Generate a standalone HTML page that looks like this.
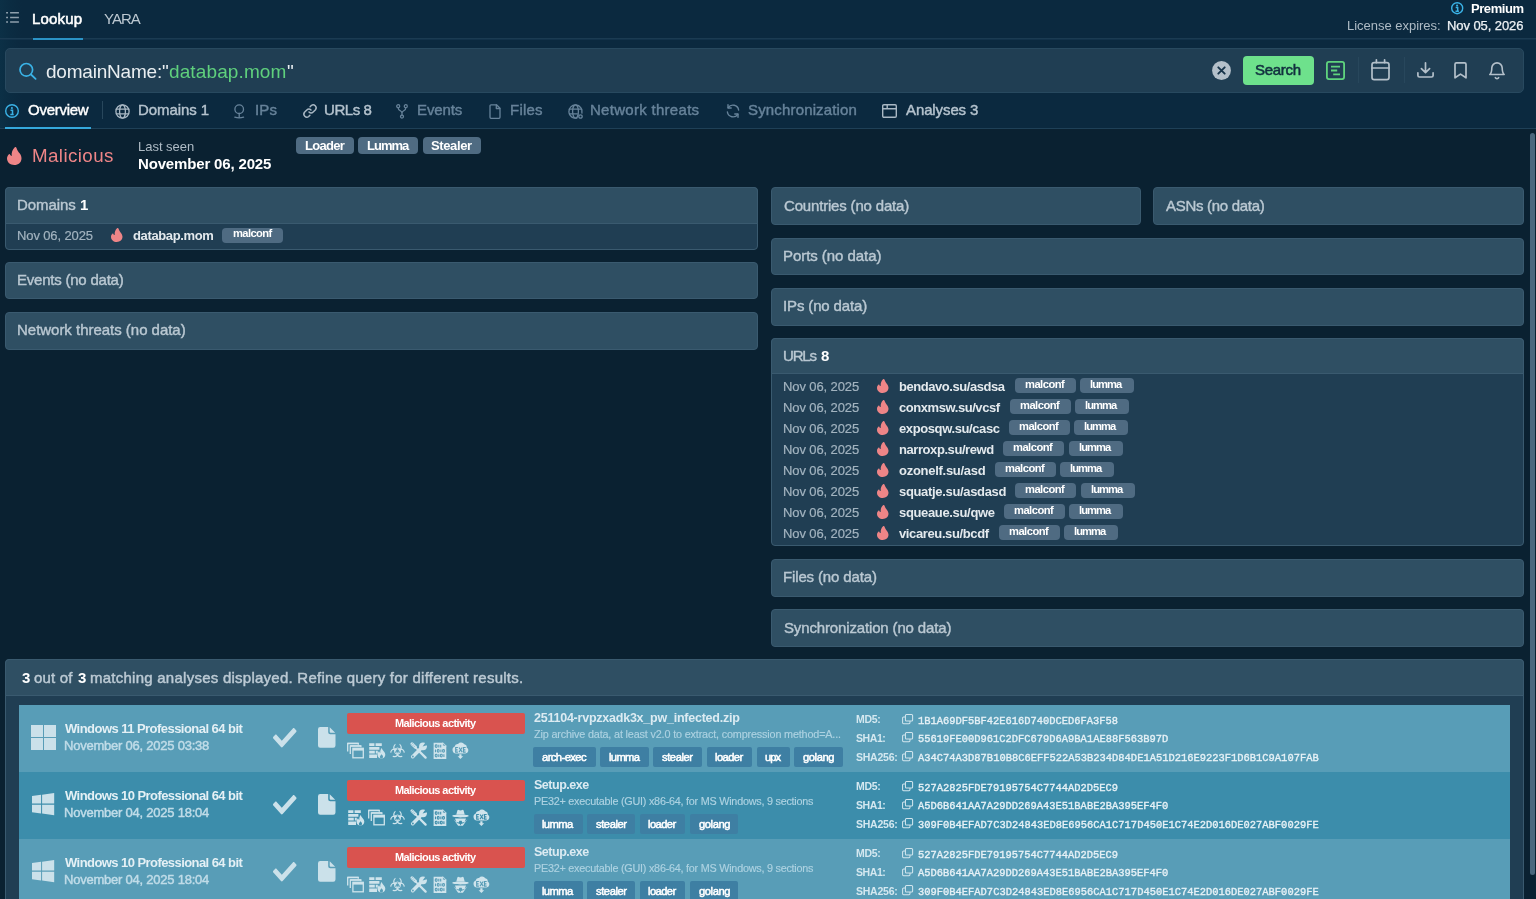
<!DOCTYPE html>
<html>
<head>
<meta charset="utf-8">
<title>Lookup</title>
<style>
*{box-sizing:border-box;margin:0;padding:0}
html,body{width:1536px;height:899px;overflow:hidden;background:#0a2131}
body{font-family:"Liberation Sans",sans-serif;color:#fff;position:relative}
.a{position:absolute}
.t{position:absolute;white-space:pre;line-height:1;will-change:transform}
svg{position:absolute;overflow:visible}
</style>
</head>
<body>
<div class="a" style="left:0px;top:0px;width:1536px;height:129px;background:#0b293f;"></div>
<div class="a" style="left:0px;top:0px;width:22px;height:129px;background:linear-gradient(90deg,#0c3046 0,#0b2c42 45%,#0b293f 100%);"></div>
<div class="a" style="left:0px;top:38px;width:1536px;height:1px;background:#1b3b52;"></div>
<div class="a" style="left:0px;top:39px;width:1536px;height:1px;background:#12324a;"></div>
<div class="a" style="left:33px;top:38px;width:50px;height:2px;background:#2b93c6;"></div>
<div class="a" style="left:5px;top:48px;width:1519px;height:45px;background:#203e53;border:1px solid #28495f;border-radius:5px"></div>
<div class="a" style="left:1243px;top:56px;width:70.5px;height:28.5px;background:#6ee18c;border-radius:4px"></div>
<div class="a" style="left:1358px;top:57px;width:1px;height:26px;background:#28475c;"></div>
<div class="a" style="left:1404px;top:57px;width:1px;height:26px;background:#28475c;"></div>
<div class="a" style="left:0px;top:128px;width:1536px;height:1px;background:#1f4057;"></div>
<div class="a" style="left:5px;top:127px;width:86px;height:2px;background:#35a8dc;"></div>
<div class="a" style="left:102px;top:101px;width:1px;height:18px;background:#28475c;"></div>
<div class="a" style="left:0px;top:129px;width:1536px;height:770px;background:#0a2131;"></div>
<div class="a" style="left:1530px;top:133px;width:4.6px;height:741.5px;background:#4b677d;border-radius:2.500px"></div>
<div class="a" style="left:296.2px;top:137px;width:57.8px;height:17px;background:#4f6b82;border-radius:4px"></div>
<div class="a" style="left:358.2px;top:137px;width:60.2px;height:17px;background:#4f6b82;border-radius:4px"></div>
<div class="a" style="left:422.8px;top:137px;width:57.8px;height:17px;background:#4f6b82;border-radius:4px"></div>
<div class="a" style="left:5px;top:187.4px;width:753.3px;height:62.19999999999999px;background:#203e53;border:1px solid #3a5a6f;border-radius:4px"></div>
<div class="a" style="left:5px;top:187.4px;width:753.3px;height:36.19999999999999px;background:#2f4f63;border:1px solid #3a5a6f;border-radius:4px 4px 0 0"></div>
<div class="a" style="left:5px;top:261.8px;width:753.3px;height:37.69999999999999px;background:#2f4f63;border:1px solid #3a5a6f;border-radius:4px"></div>
<div class="a" style="left:5px;top:312px;width:753.3px;height:37.60000000000002px;background:#2f4f63;border:1px solid #3a5a6f;border-radius:4px"></div>
<div class="a" style="left:771px;top:187.4px;width:370.20000000000005px;height:37.599999999999994px;background:#2f4f63;border:1px solid #3a5a6f;border-radius:4px"></div>
<div class="a" style="left:1153px;top:187.4px;width:370.79999999999995px;height:37.599999999999994px;background:#2f4f63;border:1px solid #3a5a6f;border-radius:4px"></div>
<div class="a" style="left:771px;top:237.8px;width:752.8px;height:37.39999999999998px;background:#2f4f63;border:1px solid #3a5a6f;border-radius:4px"></div>
<div class="a" style="left:771px;top:288px;width:752.8px;height:37.69999999999999px;background:#2f4f63;border:1px solid #3a5a6f;border-radius:4px"></div>
<div class="a" style="left:771px;top:338.2px;width:752.8px;height:208.3px;background:#203e53;border:1px solid #3a5a6f;border-radius:4px"></div>
<div class="a" style="left:771px;top:338.2px;width:752.8px;height:35.5px;background:#2f4f63;border:1px solid #3a5a6f;border-radius:4px 4px 0 0"></div>
<div class="a" style="left:771px;top:559px;width:752.8px;height:37.700000000000045px;background:#2f4f63;border:1px solid #3a5a6f;border-radius:4px"></div>
<div class="a" style="left:771px;top:609.2px;width:752.8px;height:37.5px;background:#2f4f63;border:1px solid #3a5a6f;border-radius:4px"></div>
<div class="a" style="left:222px;top:227.7px;width:60.75px;height:15.0px;background:#4f6b82;border-radius:4px"></div>
<div class="a" style="left:1014.7px;top:378.0px;width:61.0px;height:15.4px;background:#4f6b82;border-radius:4px"></div>
<div class="a" style="left:1080.2px;top:378.0px;width:54.2px;height:15.4px;background:#4f6b82;border-radius:4px"></div>
<div class="a" style="left:1009.7px;top:399.0px;width:61.0px;height:15.4px;background:#4f6b82;border-radius:4px"></div>
<div class="a" style="left:1075.2px;top:399.0px;width:54.2px;height:15.4px;background:#4f6b82;border-radius:4px"></div>
<div class="a" style="left:1008.7px;top:420.0px;width:61.0px;height:15.4px;background:#4f6b82;border-radius:4px"></div>
<div class="a" style="left:1074.2px;top:420.0px;width:54.2px;height:15.4px;background:#4f6b82;border-radius:4px"></div>
<div class="a" style="left:1003.2px;top:441.0px;width:61.0px;height:15.4px;background:#4f6b82;border-radius:4px"></div>
<div class="a" style="left:1068.7px;top:441.0px;width:54.2px;height:15.4px;background:#4f6b82;border-radius:4px"></div>
<div class="a" style="left:994.7px;top:462.0px;width:61.0px;height:15.4px;background:#4f6b82;border-radius:4px"></div>
<div class="a" style="left:1060.2px;top:462.0px;width:54.2px;height:15.4px;background:#4f6b82;border-radius:4px"></div>
<div class="a" style="left:1015.45px;top:483.0px;width:61.0px;height:15.4px;background:#4f6b82;border-radius:4px"></div>
<div class="a" style="left:1080.95px;top:483.0px;width:54.2px;height:15.4px;background:#4f6b82;border-radius:4px"></div>
<div class="a" style="left:1003.7px;top:503.99999999999994px;width:61.0px;height:15.4px;background:#4f6b82;border-radius:4px"></div>
<div class="a" style="left:1069.2px;top:503.99999999999994px;width:54.2px;height:15.4px;background:#4f6b82;border-radius:4px"></div>
<div class="a" style="left:998.7px;top:525.0px;width:61.0px;height:15.4px;background:#4f6b82;border-radius:4px"></div>
<div class="a" style="left:1064.2px;top:525.0px;width:54.2px;height:15.4px;background:#4f6b82;border-radius:4px"></div>
<div class="a" style="left:5px;top:659.2px;width:1518.8px;height:245px;background:#203e53;border:1px solid #3a5a6f;border-radius:4px 4px 0 0"></div>
<div class="a" style="left:5px;top:659.2px;width:1518.8px;height:36.8px;background:#2f4f63;border:1px solid #3a5a6f;border-radius:4px 4px 0 0"></div>
<div class="a" style="left:18.6px;top:705px;width:1491.8px;height:67px;background:#589db7;"></div>
<div class="a" style="left:30.8px;top:724.9px;width:12px;height:12px;background:#cbe1ea;"></div>
<div class="a" style="left:44.0px;top:724.9px;width:12px;height:12px;background:#cbe1ea;"></div>
<div class="a" style="left:30.8px;top:738.1px;width:12px;height:12px;background:#cbe1ea;"></div>
<div class="a" style="left:44.0px;top:738.1px;width:12px;height:12px;background:#cbe1ea;"></div>
<div class="a" style="left:347.4px;top:713.2px;width:177.4px;height:20.6px;background:#d9534f;border-radius:2px"></div>
<div class="a" style="left:533.2px;top:746.9px;width:62.7px;height:20.4px;background:#3e7fa3;border-radius:2px"></div>
<div class="a" style="left:600.2px;top:746.9px;width:48.55px;height:20.4px;background:#3e7fa3;border-radius:2px"></div>
<div class="a" style="left:653px;top:746.9px;width:49px;height:20.4px;background:#3e7fa3;border-radius:2px"></div>
<div class="a" style="left:706.5px;top:746.9px;width:45.8px;height:20.4px;background:#3e7fa3;border-radius:2px"></div>
<div class="a" style="left:756.8px;top:746.9px;width:33.3px;height:20.4px;background:#3e7fa3;border-radius:2px"></div>
<div class="a" style="left:794.4px;top:746.9px;width:48.6px;height:20.4px;background:#3e7fa3;border-radius:2px"></div>
<div class="a" style="left:18.6px;top:772px;width:1491.8px;height:67px;background:#3c8dab;"></div>
<div class="a" style="left:347.4px;top:780.2px;width:177.4px;height:20.6px;background:#d9534f;border-radius:2px"></div>
<div class="a" style="left:533.6px;top:813.9px;width:49.0px;height:20.4px;background:#3e7fa3;border-radius:2px"></div>
<div class="a" style="left:587px;top:813.9px;width:48.4px;height:20.4px;background:#3e7fa3;border-radius:2px"></div>
<div class="a" style="left:639.6px;top:813.9px;width:45.8px;height:20.4px;background:#3e7fa3;border-radius:2px"></div>
<div class="a" style="left:689.9px;top:813.9px;width:48.0px;height:20.4px;background:#3e7fa3;border-radius:2px"></div>
<div class="a" style="left:18.6px;top:839px;width:1491.8px;height:67px;background:#589db7;"></div>
<div class="a" style="left:347.4px;top:847.2px;width:177.4px;height:20.6px;background:#d9534f;border-radius:2px"></div>
<div class="a" style="left:533.6px;top:880.9px;width:49.0px;height:20.4px;background:#3e7fa3;border-radius:2px"></div>
<div class="a" style="left:587px;top:880.9px;width:48.4px;height:20.4px;background:#3e7fa3;border-radius:2px"></div>
<div class="a" style="left:639.6px;top:880.9px;width:45.8px;height:20.4px;background:#3e7fa3;border-radius:2px"></div>
<div class="a" style="left:689.9px;top:880.9px;width:48.0px;height:20.4px;background:#3e7fa3;border-radius:2px"></div>
<svg style="left:5.8px;top:12px" width="13" height="12" viewBox="0 0 13 12" ><path d="M0.100 0.700h1.900M4.100 0.700H12.900M0.100 5.500h1.900M4.100 5.500H12.900M0.100 10h1.900M4.100 10H12.900" fill="none" stroke="#8e9fac" stroke-width="1.400"/></svg>
<svg style="left:1450.3999999999999px;top:0.7999999999999998px" width="14.4" height="14.4" viewBox="-7.2 -7.2 14.4 14.4" ><circle r="5.5" fill="none" stroke="#3ab2e6" stroke-width="1.4"/><circle cx="-0.100" cy="-2.60" r="1.050" fill="#3ab2e6"/><path d="M-1.500 -0.62h2v3.60M-1.700 3.10h3.400" fill="none" stroke="#3ab2e6" stroke-width="1.500"/></svg>
<svg style="left:19px;top:61.5px" width="19" height="19" viewBox="0 0 19 19" ><circle cx="7.300" cy="7.800" r="6.300" fill="none" stroke="#3ab2e6" stroke-width="1.700"/><path d="M12 12.500l4.600 4.400" stroke="#3ab2e6" stroke-width="1.800" stroke-linecap="round"/></svg>
<svg style="left:1212px;top:61px" width="19" height="19" viewBox="-9.5 -9.5 19 19" ><circle r="9.4" fill="#b4c0ca"/><path d="M-3.2 -3.2L3.2 3.2M3.2 -3.2L-3.2 3.2" stroke="#17344a" stroke-width="1.9" stroke-linecap="round"/></svg>
<svg style="left:1326px;top:61px" width="19" height="19" viewBox="0 0 19 19" ><rect x="0.9" y="0.9" width="17.2" height="17.2" rx="2" fill="none" stroke="#5fd47e" stroke-width="1.8"/><path d="M5 5.6h9M5 9.5h6.2M7.2 13.4h6.8" stroke="#5fd47e" stroke-width="1.8"/></svg>
<svg style="left:1371px;top:59px" width="19" height="22" viewBox="0 0 19 22" ><rect x="1" y="3.6" width="17" height="17" rx="2.2" fill="none" stroke="#b4c0ca" stroke-width="1.7"/><path d="M1 9h17M5.4 0.8v2.8M13.6 0.8v2.8" stroke="#b4c0ca" stroke-width="1.7" fill="none" stroke-linecap="round"/></svg>
<svg style="left:1417px;top:62px" width="17" height="16" viewBox="0 0 17 16" ><path d="M8.5 0.8v9.6M4.4 6.6l4.1 4 4.1-4M0.9 10.8v2.6a1.6 1.6 0 0 0 1.6 1.6h12a1.6 1.6 0 0 0 1.6-1.6v-2.6" fill="none" stroke="#b4c0ca" stroke-width="1.7" stroke-linecap="round" stroke-linejoin="round"/></svg>
<svg style="left:1454px;top:62px" width="13" height="17" viewBox="0 0 13 17" ><path d="M1 2.2a1.4 1.4 0 0 1 1.4-1.4h8.2a1.4 1.4 0 0 1 1.4 1.4v13.6l-5.500-3.700-5.500 3.700z" fill="none" stroke="#b4c0ca" stroke-width="1.7" stroke-linejoin="round"/></svg>
<svg style="left:1489px;top:62px" width="16" height="18" viewBox="0 0 16 18" ><path d="M8 0.9a5.2 5.2 0 0 0-5.200 5.200c0 4.800-2 6.400-2 6.400h14.400s-2-1.600-2-6.400a5.200 5.200 0 0 0-5.200-5.200zM6.300 15.600a1.900 1.900 0 0 0 3.400 0" fill="none" stroke="#b4c0ca" stroke-width="1.6" stroke-linecap="round" stroke-linejoin="round"/></svg>
<svg style="left:4.1px;top:103.1px" width="16" height="16" viewBox="-8 -8 16 16" ><circle r="6.3" fill="none" stroke="#3ab2e6" stroke-width="1.4"/><circle cx="-0.100" cy="-2.94" r="1.050" fill="#3ab2e6"/><path d="M-1.500 -0.70h2v4.06M-1.700 3.50h3.400" fill="none" stroke="#3ab2e6" stroke-width="1.500"/></svg>
<svg style="left:115px;top:104px" width="15" height="15" viewBox="-7.5 -7.5 15 15" ><g fill="none" stroke="#a9b8c4" stroke-width="1.3" stroke-linecap="round" stroke-linejoin="round"><circle r="6.600"/><ellipse rx="2.900" ry="6.600"/><path d="M-6.200 -2.300h12.400M-6.200 2.300h12.400"/></g></svg>
<svg style="left:233px;top:104px" width="12" height="15" viewBox="0 0 12 15" ><g fill="none" stroke="#67839a" stroke-width="1.3" stroke-linecap="round" stroke-linejoin="round"><circle cx="6.200" cy="5.200" r="4.300"/><path d="M6.200 9.500v3.200M1.800 13.200q4.400 1.500 8.800 0"/></g></svg>
<svg style="left:303px;top:104px" width="14" height="14" viewBox="0 0 14 14" ><g fill="none" stroke="#a9b8c4" stroke-width="1.5" stroke-linecap="round" stroke-linejoin="round"><path d="M6 8a3 3 0 0 0 4.200 0l2.300-2.300a3 3 0 0 0-4.200-4.200l-1.200 1.200"/><path d="M8 6a3 3 0 0 0-4.200 0l-2.300 2.300a3 3 0 0 0 4.200 4.200l1.200-1.200"/></g></svg>
<svg style="left:396px;top:104px" width="12" height="15" viewBox="0 0 12 15" ><g fill="none" stroke="#67839a" stroke-width="1.3" stroke-linecap="round" stroke-linejoin="round"><circle cx="2.200" cy="2.200" r="1.500"/><circle cx="9.800" cy="2.200" r="1.500"/><circle cx="6" cy="12.600" r="1.500"/><path d="M2.200 3.700c0 3.600 3.800 2.600 3.800 5.400v2M9.800 3.700c0 3.600-3.800 2.600-3.800 5.400"/></g></svg>
<svg style="left:489px;top:104px" width="12" height="15" viewBox="0 0 12 15" ><g fill="none" stroke="#67839a" stroke-width="1.3" stroke-linecap="round" stroke-linejoin="round"><path d="M1 1.800a1 1 0 0 1 1-1h5.500l3.500 3.500v9a1 1 0 0 1-1 1h-8a1 1 0 0 1-1-1z"/><path d="M7.300 1v3.500h3.500"/></g></svg>
<svg style="left:568px;top:104px" width="15" height="15" viewBox="-7.500 -7.500 15 15" ><g fill="none" stroke="#67839a" stroke-width="1.3" stroke-linecap="round" stroke-linejoin="round"><path d="M6.400 1.500a6.600 6.600 0 1 0-5 5"/><ellipse rx="2.900" ry="6.600" /><path d="M-6.200 -2.300h12.400M-6.200 2.300h8"/><circle cx="5" cy="5" r="1.700"/></g></svg>
<svg style="left:726px;top:104px" width="14" height="14" viewBox="0 0 14 14" ><g fill="none" stroke="#67839a" stroke-width="1.4" stroke-linecap="round" stroke-linejoin="round"><path d="M12.600 6a5.700 5.700 0 0 0-10.400-2.300M1.400 8a5.700 5.700 0 0 0 10.400 2.300"/><path d="M2 0.800v3.200h3.200M12 13.200v-3.200h-3.200"/></g></svg>
<svg style="left:882px;top:103.5px" width="15" height="14" viewBox="0 0 15 14" ><g fill="none" stroke="#a9b8c4" stroke-width="1.4" stroke-linecap="round" stroke-linejoin="round"><rect x="0.700" y="0.700" width="13.600" height="12.600" rx="1.200"/><path d="M0.700 4.800h13.600M5.200 0.700v4.100"/></g></svg>
<svg style="left:7px;top:146.8px" width="14.5" height="18" viewBox="0 0 14.5 18" preserveAspectRatio="none"><path fill="#ee8587" d="M8.5 0C9.4 0.2 9.6 1 9.8 1.700C10.300 3.600 11.600 5 12.800 6.600C13.800 7.900 14.500 9.600 14.500 11.400C14.500 15.200 11.400 18 7.300 18C3.200 18 0 15.200 0 11.500C0 9.800 0.800 8.200 2 7.200C2.400 6.900 2.900 7.100 3 7.600C3.200 8.200 3.700 8.700 4.400 9C4.600 9 4.700 8.900 4.700 8.700C4.300 5.500 5.500 2.400 7.600 0.400C7.900 0.100 8.200 0 8.500 0Z"/></svg>
<svg style="left:111.4px;top:227.8px" width="11.5" height="14" viewBox="0 0 14.5 18" preserveAspectRatio="none"><path fill="#ee8587" d="M8.5 0C9.4 0.2 9.6 1 9.8 1.700C10.300 3.600 11.600 5 12.800 6.600C13.800 7.900 14.500 9.600 14.500 11.400C14.500 15.200 11.400 18 7.300 18C3.200 18 0 15.200 0 11.500C0 9.800 0.800 8.200 2 7.200C2.400 6.900 2.900 7.100 3 7.600C3.200 8.200 3.700 8.700 4.400 9C4.600 9 4.700 8.900 4.700 8.700C4.300 5.500 5.500 2.400 7.600 0.400C7.900 0.100 8.200 0 8.500 0Z"/></svg>
<svg style="left:877.1px;top:378.7px" width="11.5" height="14" viewBox="0 0 14.5 18" preserveAspectRatio="none"><path fill="#ee8587" d="M8.5 0C9.4 0.2 9.6 1 9.8 1.700C10.300 3.600 11.600 5 12.800 6.600C13.800 7.900 14.500 9.600 14.500 11.400C14.500 15.200 11.400 18 7.300 18C3.200 18 0 15.200 0 11.500C0 9.800 0.800 8.200 2 7.200C2.400 6.900 2.900 7.100 3 7.600C3.200 8.200 3.700 8.700 4.400 9C4.600 9 4.700 8.900 4.700 8.700C4.300 5.500 5.500 2.400 7.600 0.400C7.900 0.100 8.200 0 8.500 0Z"/></svg>
<svg style="left:877.1px;top:399.7px" width="11.5" height="14" viewBox="0 0 14.5 18" preserveAspectRatio="none"><path fill="#ee8587" d="M8.5 0C9.4 0.2 9.6 1 9.8 1.700C10.300 3.600 11.600 5 12.800 6.600C13.800 7.900 14.500 9.600 14.500 11.400C14.500 15.200 11.400 18 7.300 18C3.200 18 0 15.200 0 11.500C0 9.800 0.800 8.200 2 7.200C2.400 6.900 2.900 7.100 3 7.600C3.200 8.200 3.700 8.700 4.400 9C4.600 9 4.700 8.900 4.700 8.700C4.300 5.500 5.500 2.400 7.600 0.400C7.900 0.100 8.200 0 8.500 0Z"/></svg>
<svg style="left:877.1px;top:420.7px" width="11.5" height="14" viewBox="0 0 14.5 18" preserveAspectRatio="none"><path fill="#ee8587" d="M8.5 0C9.4 0.2 9.6 1 9.8 1.700C10.300 3.600 11.600 5 12.800 6.600C13.800 7.900 14.500 9.600 14.500 11.400C14.500 15.200 11.400 18 7.300 18C3.200 18 0 15.200 0 11.500C0 9.800 0.800 8.200 2 7.200C2.400 6.900 2.900 7.100 3 7.600C3.200 8.200 3.700 8.700 4.400 9C4.600 9 4.700 8.900 4.700 8.700C4.300 5.500 5.500 2.400 7.600 0.400C7.900 0.100 8.200 0 8.500 0Z"/></svg>
<svg style="left:877.1px;top:441.7px" width="11.5" height="14" viewBox="0 0 14.5 18" preserveAspectRatio="none"><path fill="#ee8587" d="M8.5 0C9.4 0.2 9.6 1 9.8 1.700C10.300 3.600 11.600 5 12.800 6.600C13.800 7.900 14.500 9.600 14.500 11.400C14.500 15.200 11.400 18 7.300 18C3.200 18 0 15.200 0 11.500C0 9.800 0.800 8.200 2 7.200C2.400 6.900 2.900 7.100 3 7.600C3.200 8.200 3.700 8.700 4.400 9C4.600 9 4.700 8.900 4.700 8.700C4.300 5.500 5.500 2.400 7.600 0.400C7.900 0.100 8.200 0 8.500 0Z"/></svg>
<svg style="left:877.1px;top:462.7px" width="11.5" height="14" viewBox="0 0 14.5 18" preserveAspectRatio="none"><path fill="#ee8587" d="M8.5 0C9.4 0.2 9.6 1 9.8 1.700C10.300 3.600 11.600 5 12.800 6.600C13.800 7.900 14.500 9.600 14.500 11.400C14.500 15.200 11.400 18 7.300 18C3.200 18 0 15.200 0 11.500C0 9.800 0.800 8.200 2 7.200C2.400 6.900 2.900 7.100 3 7.600C3.200 8.200 3.700 8.700 4.400 9C4.600 9 4.700 8.900 4.700 8.700C4.300 5.500 5.500 2.400 7.600 0.400C7.900 0.100 8.200 0 8.500 0Z"/></svg>
<svg style="left:877.1px;top:483.7px" width="11.5" height="14" viewBox="0 0 14.5 18" preserveAspectRatio="none"><path fill="#ee8587" d="M8.5 0C9.4 0.2 9.6 1 9.8 1.700C10.300 3.600 11.600 5 12.800 6.600C13.800 7.900 14.500 9.600 14.500 11.400C14.500 15.200 11.400 18 7.300 18C3.200 18 0 15.200 0 11.500C0 9.800 0.800 8.200 2 7.200C2.400 6.900 2.900 7.100 3 7.600C3.200 8.200 3.700 8.700 4.400 9C4.600 9 4.700 8.900 4.700 8.700C4.300 5.500 5.500 2.400 7.600 0.400C7.900 0.100 8.200 0 8.500 0Z"/></svg>
<svg style="left:877.1px;top:504.69999999999993px" width="11.5" height="14" viewBox="0 0 14.5 18" preserveAspectRatio="none"><path fill="#ee8587" d="M8.5 0C9.4 0.2 9.6 1 9.8 1.700C10.300 3.600 11.600 5 12.800 6.600C13.800 7.900 14.500 9.600 14.500 11.400C14.500 15.200 11.400 18 7.300 18C3.200 18 0 15.200 0 11.500C0 9.800 0.800 8.200 2 7.200C2.400 6.900 2.900 7.100 3 7.600C3.200 8.200 3.700 8.700 4.400 9C4.600 9 4.700 8.900 4.700 8.700C4.300 5.500 5.500 2.400 7.600 0.400C7.900 0.100 8.200 0 8.500 0Z"/></svg>
<svg style="left:877.1px;top:525.6999999999999px" width="11.5" height="14" viewBox="0 0 14.5 18" preserveAspectRatio="none"><path fill="#ee8587" d="M8.5 0C9.4 0.2 9.6 1 9.8 1.700C10.300 3.600 11.600 5 12.800 6.600C13.800 7.900 14.500 9.600 14.500 11.400C14.500 15.200 11.400 18 7.300 18C3.200 18 0 15.200 0 11.500C0 9.800 0.800 8.200 2 7.200C2.400 6.900 2.900 7.100 3 7.600C3.200 8.200 3.700 8.700 4.400 9C4.600 9 4.700 8.900 4.700 8.700C4.300 5.500 5.500 2.400 7.600 0.400C7.900 0.100 8.200 0 8.500 0Z"/></svg>
<svg style="left:273px;top:727.7px" width="23.5" height="19.5" viewBox="0 65 512 382" preserveAspectRatio="none"><path fill="#cbe1ea" d="M173.898 439.404l-166.4-166.4c-9.997-9.997-9.997-26.206 0-36.204l36.203-36.204c9.997-9.998 26.207-9.998 36.204 0L192 312.69 432.095 72.596c9.997-9.997 26.207-9.997 36.204 0l36.203 36.204c9.997 9.997 9.997 26.206 0 36.204l-294.4 294.401c-9.998 9.997-26.207 9.997-36.204-.001z"/></svg>
<svg style="left:317.8px;top:727.1px" width="17.5" height="20.8" viewBox="0 0 17.500 20.800" ><path fill="#cbe1ea" d="M2.200 0h8v5.300a2 2 0 0 0 2 2h5.300v11.300a2.200 2.200 0 0 1-2.200 2.200H2.200A2.200 2.200 0 0 1 0 18.600V2.200A2.200 2.200 0 0 1 2.200 0zM11.700 0.300l5.500 5.500h-4.500a1 1 0 0 1-1-1z"/></svg>
<svg style="left:347px;top:742.2px" width="17" height="17" viewBox="0 0 17 17" ><g fill="none" stroke="#cfe4ec" stroke-width="1.300"><path d="M0.700 9.500V1.300h10.600v1.400M3.300 12V3.800h10.600v1.400"/><rect x="5.900" y="6.300" width="10.400" height="9.500"/></g><path d="M5.900 6.300h10.400v2.300H5.900z" fill="#cfe4ec"/><path d="M0.700 0.700h10.600v1.500H0.700zM3.300 3.200h10.600v1.500H3.300z" fill="#cfe4ec"/></svg>
<svg style="left:368.2px;top:742.2px" width="17" height="17" viewBox="0 0 17 17" ><g fill="#cfe4ec"><path d="M1.200 1.200h5.200v2.700H1.200zM7.600 1.200h6.200v2.700H7.600zM1.200 5h10.200v2.700H1.200zM1.200 8.800h5.600v2.700H1.200zM7.800 8.800h2v2.700h-2zM1.200 12.600h7.800v3.400H1.200z"/><path d="M13.700 6c0.600 2.400 3.600 3.800 3.600 6.800 0 2.200-1.700 3.800-3.900 3.800s-3.900-1.600-3.900-3.800c0-1.700 0.900-2.800 1.600-3.500 0.200 0.900 0.600 1.500 1.200 1.700-0.200-1.900 0.300-3.700 1.400-5z"/></g><path d="M13.500 12.300c0.900 0.900 1.500 1.500 1.500 2.500 0 0.900-0.700 1.600-1.600 1.600s-1.500-0.700-1.500-1.500c0-0.900 0.800-1.500 1.600-2.600z" fill="#589db7"/></svg>
<svg style="left:389px;top:742.2px" width="17" height="17" viewBox="-8.500 -8.500 17 17" ><g fill="none" stroke="#cfe4ec" stroke-width="1.250"><circle cx="0.00" cy="-2.90" r="3.700"/><circle cx="3.03" cy="2.35" r="3.700"/><circle cx="-3.03" cy="2.35" r="3.700"/></g><circle cx="0.00" cy="-7.00" r="2.300" fill="#589db7"/><circle cx="6.58" cy="4.40" r="2.300" fill="#589db7"/><circle cx="-6.58" cy="4.40" r="2.300" fill="#589db7"/><circle cx="0" cy="0.600" r="1.500" fill="#589db7"/><circle cx="0" cy="0.600" r="3.100" fill="none" stroke="#cfe4ec" stroke-width="0.950"/></svg>
<svg style="left:410px;top:742.2px" width="17" height="17" viewBox="0 0 17 17" ><g stroke="#cfe4ec" stroke-linecap="round" fill="none"><path d="M2.700 14.700L11.800 5.600" stroke-width="3.500"/><path d="M2 1.800l3.400 3.400" stroke-width="3.100"/><path d="M5.600 5.600l4.200 4.200" stroke-width="1.500"/><path d="M10.200 10.200l5.400 5.400" stroke-width="2.300"/></g><circle cx="13" cy="4.300" r="3.900" fill="#cfe4ec"/><path d="M12.600 4.600L16.200 -0.600 18.600 2.800z" fill="#589db7"/><circle cx="2.900" cy="14.500" r="0.900" fill="#589db7"/><path d="M1.300 2.700l1.500-1.500M2.500 3.900l1.500-1.500M3.700 5.100l1.500-1.500" stroke="#589db7" stroke-width="0.500"/></svg>
<svg style="left:432.6px;top:742.2px" width="14" height="17" viewBox="0 0 14 17" ><path d="M0.600 0.700h9.300l3.400 3.400v12.900H0.600z" fill="#cfe4ec"/><path d="M9.900 0.700v3.400h3.400z" fill="#589db7" stroke="#cfe4ec" stroke-width="0.800"/><g fill="none" stroke="#589db7" stroke-width="1.100"><rect x="2.300" y="2.800" width="1.800" height="2.700" rx="0.900"/><path d="M5.800 2.800v2.700M7.700 2.800v2.700"/><path d="M2.500 7.500v2.700"/><rect x="4.300" y="7.500" width="1.800" height="2.700" rx="0.900"/><path d="M7.900 7.500v2.700"/><rect x="9.600" y="7.500" width="1.800" height="2.700" rx="0.900"/><rect x="2.300" y="12.200" width="1.800" height="2.700" rx="0.900"/><path d="M5.800 12.200v2.700"/><rect x="7.400" y="12.200" width="1.800" height="2.700" rx="0.900"/><path d="M10.900 12.200v2.700"/></g></svg>
<svg style="left:451.6px;top:742.2px" width="17" height="17" viewBox="0 0 17 17" ><path d="M3.900 11.500a3.600 3.600 0 0 1-1.200-6.900 3 3 0 0 1 3.300-2.600 4 4 0 0 1 6.300 0.300 3 3 0 0 1 2.400 3.200 3.200 3.200 0 0 1-1.300 6z" fill="#cfe4ec"/><path d="M7.300 12.300h2.200v1.900h1.700l-2.800 2.900-2.800-2.900h1.700z" fill="#cfe4ec"/><path d="M5.900 5.500H3.700v4.600h2.200M3.700 7.800h1.900M7 5.500l3.200 4.600M10.200 5.500L7 10.100M13.700 5.500h-2.200v4.600h2.200M11.500 7.800h1.900" fill="none" stroke="#589db7" stroke-width="1.150"/></svg>
<svg style="left:902px;top:714.0px" width="11.4" height="10.4" viewBox="0 0 12 11" ><g fill="none" stroke="#d2e6ee" stroke-width="1.100"><rect x="3.600" y="0.550" width="7.600" height="6.800" rx="1.100"/><path d="M3.600 3.200H1.600a1 1 0 0 0-1 1v5.100a1 1 0 0 0 1 1h5.800a1 1 0 0 0 1-1V7.400"/></g></svg>
<svg style="left:902px;top:732.4000000000001px" width="11.4" height="10.4" viewBox="0 0 12 11" ><g fill="none" stroke="#d2e6ee" stroke-width="1.100"><rect x="3.600" y="0.550" width="7.600" height="6.800" rx="1.100"/><path d="M3.600 3.200H1.600a1 1 0 0 0-1 1v5.100a1 1 0 0 0 1 1h5.800a1 1 0 0 0 1-1V7.400"/></g></svg>
<svg style="left:902px;top:751.4000000000001px" width="11.4" height="10.4" viewBox="0 0 12 11" ><g fill="none" stroke="#d2e6ee" stroke-width="1.100"><rect x="3.600" y="0.550" width="7.600" height="6.800" rx="1.100"/><path d="M3.600 3.200H1.600a1 1 0 0 0-1 1v5.100a1 1 0 0 0 1 1h5.800a1 1 0 0 0 1-1V7.400"/></g></svg>
<svg style="left:32.4px;top:793.2px" width="22.2" height="22.2" viewBox="0 32 448 448" preserveAspectRatio="none"><path fill="#cbe1ea" d="M0 93.7l183.600-25.300v177.400H0V93.700zm0 324.600l183.600 25.300V268.400H0v149.900zm203.800 28L448 480V268.400H203.800v177.900zm0-380.600v180.100H448V32L203.800 65.700z"/></svg>
<svg style="left:273px;top:794.7px" width="23.5" height="19.5" viewBox="0 65 512 382" preserveAspectRatio="none"><path fill="#cbe1ea" d="M173.898 439.404l-166.4-166.4c-9.997-9.997-9.997-26.206 0-36.204l36.203-36.204c9.997-9.998 26.207-9.998 36.204 0L192 312.69 432.095 72.596c9.997-9.997 26.207-9.997 36.204 0l36.203 36.204c9.997 9.997 9.997 26.206 0 36.204l-294.4 294.401c-9.998 9.997-26.207 9.997-36.204-.001z"/></svg>
<svg style="left:317.8px;top:794.1px" width="17.5" height="20.8" viewBox="0 0 17.500 20.800" ><path fill="#cbe1ea" d="M2.200 0h8v5.300a2 2 0 0 0 2 2h5.300v11.300a2.200 2.200 0 0 1-2.200 2.200H2.200A2.200 2.200 0 0 1 0 18.600V2.200A2.200 2.200 0 0 1 2.200 0zM11.700 0.300l5.500 5.500h-4.500a1 1 0 0 1-1-1z"/></svg>
<svg style="left:347px;top:809.2px" width="17" height="17" viewBox="0 0 17 17" ><g fill="#cfe4ec"><path d="M1.200 1.200h5.200v2.700H1.200zM7.600 1.200h6.200v2.700H7.600zM1.200 5h10.200v2.700H1.200zM1.200 8.800h5.600v2.700H1.200zM7.800 8.800h2v2.700h-2zM1.200 12.600h7.800v3.400H1.200z"/><path d="M13.700 6c0.600 2.400 3.600 3.800 3.600 6.800 0 2.200-1.700 3.800-3.900 3.800s-3.900-1.600-3.900-3.800c0-1.700 0.900-2.800 1.600-3.500 0.200 0.900 0.600 1.500 1.200 1.700-0.200-1.900 0.300-3.700 1.400-5z"/></g><path d="M13.500 12.300c0.900 0.900 1.500 1.500 1.500 2.500 0 0.900-0.700 1.600-1.600 1.600s-1.500-0.700-1.500-1.500c0-0.900 0.800-1.500 1.600-2.600z" fill="#3c8dab"/></svg>
<svg style="left:368.2px;top:809.2px" width="17" height="17" viewBox="0 0 17 17" ><g fill="none" stroke="#cfe4ec" stroke-width="1.300"><path d="M0.700 9.500V1.300h10.600v1.400M3.300 12V3.800h10.600v1.400"/><rect x="5.900" y="6.300" width="10.400" height="9.500"/></g><path d="M5.900 6.300h10.400v2.300H5.900z" fill="#cfe4ec"/><path d="M0.700 0.700h10.600v1.500H0.700zM3.300 3.200h10.600v1.500H3.300z" fill="#cfe4ec"/></svg>
<svg style="left:389px;top:809.2px" width="17" height="17" viewBox="-8.500 -8.500 17 17" ><g fill="none" stroke="#cfe4ec" stroke-width="1.250"><circle cx="0.00" cy="-2.90" r="3.700"/><circle cx="3.03" cy="2.35" r="3.700"/><circle cx="-3.03" cy="2.35" r="3.700"/></g><circle cx="0.00" cy="-7.00" r="2.300" fill="#3c8dab"/><circle cx="6.58" cy="4.40" r="2.300" fill="#3c8dab"/><circle cx="-6.58" cy="4.40" r="2.300" fill="#3c8dab"/><circle cx="0" cy="0.600" r="1.500" fill="#3c8dab"/><circle cx="0" cy="0.600" r="3.100" fill="none" stroke="#cfe4ec" stroke-width="0.950"/></svg>
<svg style="left:410px;top:809.2px" width="17" height="17" viewBox="0 0 17 17" ><g stroke="#cfe4ec" stroke-linecap="round" fill="none"><path d="M2.700 14.700L11.800 5.600" stroke-width="3.500"/><path d="M2 1.800l3.400 3.400" stroke-width="3.100"/><path d="M5.600 5.600l4.200 4.200" stroke-width="1.500"/><path d="M10.200 10.200l5.400 5.400" stroke-width="2.300"/></g><circle cx="13" cy="4.300" r="3.900" fill="#cfe4ec"/><path d="M12.600 4.600L16.200 -0.600 18.600 2.800z" fill="#3c8dab"/><circle cx="2.900" cy="14.500" r="0.900" fill="#3c8dab"/><path d="M1.300 2.700l1.500-1.500M2.500 3.900l1.500-1.500M3.700 5.100l1.500-1.500" stroke="#3c8dab" stroke-width="0.500"/></svg>
<svg style="left:432.6px;top:809.2px" width="14" height="17" viewBox="0 0 14 17" ><path d="M0.600 0.700h9.300l3.400 3.400v12.900H0.600z" fill="#cfe4ec"/><path d="M9.900 0.700v3.400h3.400z" fill="#3c8dab" stroke="#cfe4ec" stroke-width="0.800"/><g fill="none" stroke="#3c8dab" stroke-width="1.100"><rect x="2.300" y="2.800" width="1.800" height="2.700" rx="0.900"/><path d="M5.800 2.800v2.700M7.700 2.800v2.700"/><path d="M2.500 7.500v2.700"/><rect x="4.300" y="7.500" width="1.800" height="2.700" rx="0.900"/><path d="M7.900 7.500v2.700"/><rect x="9.600" y="7.500" width="1.800" height="2.700" rx="0.900"/><rect x="2.300" y="12.200" width="1.800" height="2.700" rx="0.900"/><path d="M5.800 12.200v2.700"/><rect x="7.400" y="12.200" width="1.800" height="2.700" rx="0.900"/><path d="M10.900 12.200v2.700"/></g></svg>
<svg style="left:452px;top:809.2px" width="17" height="17" viewBox="0 0 17 17" ><g fill="#cfe4ec"><path d="M4.300 5.600L5.400 1.500c0.200-0.600 0.700-0.800 1.200-0.600l1.900 0.700 1.900-0.700c0.500-0.200 1 0 1.200 0.600l1.100 4.100z"/><path d="M0.300 7c0-0.800 3.700-1.400 8.200-1.400s8.200 0.600 8.200 1.400-3.700 1.400-8.200 1.400-8.200-0.600-8.200-1.400z"/><path d="M3 9.500h11l-1.300 3.400-2.400 0.500-0.700-1.700h-2.200l-0.700 1.700-2.400-0.500z"/><path d="M1.600 10.300l3.600 3.700 2.600 1 0.700 1.600 0.700-1.600 2.600-1 3.600-3.700-4.500 6.500h-4.800z"/></g></svg>
<svg style="left:473px;top:809.2px" width="17" height="17" viewBox="0 0 17 17" ><path d="M3.900 11.500a3.600 3.600 0 0 1-1.200-6.900 3 3 0 0 1 3.300-2.600 4 4 0 0 1 6.300 0.300 3 3 0 0 1 2.400 3.200 3.200 3.200 0 0 1-1.300 6z" fill="#cfe4ec"/><path d="M7.300 12.300h2.200v1.900h1.700l-2.800 2.900-2.800-2.900h1.700z" fill="#cfe4ec"/><path d="M5.900 5.500H3.700v4.600h2.200M3.700 7.800h1.900M7 5.500l3.200 4.600M10.200 5.500L7 10.100M13.700 5.500h-2.200v4.600h2.200M11.500 7.800h1.900" fill="none" stroke="#3c8dab" stroke-width="1.150"/></svg>
<svg style="left:902px;top:781.0px" width="11.4" height="10.4" viewBox="0 0 12 11" ><g fill="none" stroke="#d2e6ee" stroke-width="1.100"><rect x="3.600" y="0.550" width="7.600" height="6.800" rx="1.100"/><path d="M3.600 3.200H1.600a1 1 0 0 0-1 1v5.100a1 1 0 0 0 1 1h5.800a1 1 0 0 0 1-1V7.400"/></g></svg>
<svg style="left:902px;top:799.4000000000001px" width="11.4" height="10.4" viewBox="0 0 12 11" ><g fill="none" stroke="#d2e6ee" stroke-width="1.100"><rect x="3.600" y="0.550" width="7.600" height="6.800" rx="1.100"/><path d="M3.600 3.200H1.600a1 1 0 0 0-1 1v5.100a1 1 0 0 0 1 1h5.800a1 1 0 0 0 1-1V7.400"/></g></svg>
<svg style="left:902px;top:818.4000000000001px" width="11.4" height="10.4" viewBox="0 0 12 11" ><g fill="none" stroke="#d2e6ee" stroke-width="1.100"><rect x="3.600" y="0.550" width="7.600" height="6.800" rx="1.100"/><path d="M3.600 3.200H1.600a1 1 0 0 0-1 1v5.100a1 1 0 0 0 1 1h5.800a1 1 0 0 0 1-1V7.400"/></g></svg>
<svg style="left:32.4px;top:860.2px" width="22.2" height="22.2" viewBox="0 32 448 448" preserveAspectRatio="none"><path fill="#cbe1ea" d="M0 93.7l183.600-25.300v177.400H0V93.700zm0 324.600l183.600 25.300V268.400H0v149.900zm203.800 28L448 480V268.400H203.800v177.900zm0-380.600v180.100H448V32L203.800 65.700z"/></svg>
<svg style="left:273px;top:861.7px" width="23.5" height="19.5" viewBox="0 65 512 382" preserveAspectRatio="none"><path fill="#cbe1ea" d="M173.898 439.404l-166.4-166.4c-9.997-9.997-9.997-26.206 0-36.204l36.203-36.204c9.997-9.998 26.207-9.998 36.204 0L192 312.69 432.095 72.596c9.997-9.997 26.207-9.997 36.204 0l36.203 36.204c9.997 9.997 9.997 26.206 0 36.204l-294.4 294.401c-9.998 9.997-26.207 9.997-36.204-.001z"/></svg>
<svg style="left:317.8px;top:861.1px" width="17.5" height="20.8" viewBox="0 0 17.500 20.800" ><path fill="#cbe1ea" d="M2.200 0h8v5.300a2 2 0 0 0 2 2h5.300v11.300a2.200 2.200 0 0 1-2.200 2.200H2.200A2.200 2.200 0 0 1 0 18.600V2.200A2.200 2.200 0 0 1 2.200 0zM11.700 0.300l5.500 5.500h-4.500a1 1 0 0 1-1-1z"/></svg>
<svg style="left:347px;top:876.2px" width="17" height="17" viewBox="0 0 17 17" ><g fill="none" stroke="#cfe4ec" stroke-width="1.300"><path d="M0.700 9.500V1.300h10.600v1.400M3.300 12V3.800h10.600v1.400"/><rect x="5.900" y="6.300" width="10.400" height="9.500"/></g><path d="M5.900 6.300h10.400v2.300H5.900z" fill="#cfe4ec"/><path d="M0.700 0.700h10.600v1.500H0.700zM3.300 3.200h10.600v1.500H3.300z" fill="#cfe4ec"/></svg>
<svg style="left:368.2px;top:876.2px" width="17" height="17" viewBox="0 0 17 17" ><g fill="#cfe4ec"><path d="M1.200 1.200h5.200v2.700H1.200zM7.600 1.200h6.200v2.700H7.600zM1.200 5h10.200v2.700H1.200zM1.200 8.800h5.600v2.700H1.200zM7.800 8.800h2v2.700h-2zM1.200 12.600h7.800v3.400H1.200z"/><path d="M13.700 6c0.600 2.400 3.600 3.800 3.600 6.800 0 2.200-1.700 3.800-3.900 3.800s-3.900-1.600-3.900-3.800c0-1.700 0.900-2.800 1.600-3.500 0.200 0.900 0.600 1.500 1.200 1.700-0.200-1.900 0.300-3.700 1.400-5z"/></g><path d="M13.500 12.300c0.900 0.900 1.500 1.500 1.500 2.500 0 0.900-0.700 1.600-1.600 1.600s-1.500-0.700-1.500-1.500c0-0.900 0.800-1.500 1.600-2.600z" fill="#589db7"/></svg>
<svg style="left:389px;top:876.2px" width="17" height="17" viewBox="-8.500 -8.500 17 17" ><g fill="none" stroke="#cfe4ec" stroke-width="1.250"><circle cx="0.00" cy="-2.90" r="3.700"/><circle cx="3.03" cy="2.35" r="3.700"/><circle cx="-3.03" cy="2.35" r="3.700"/></g><circle cx="0.00" cy="-7.00" r="2.300" fill="#589db7"/><circle cx="6.58" cy="4.40" r="2.300" fill="#589db7"/><circle cx="-6.58" cy="4.40" r="2.300" fill="#589db7"/><circle cx="0" cy="0.600" r="1.500" fill="#589db7"/><circle cx="0" cy="0.600" r="3.100" fill="none" stroke="#cfe4ec" stroke-width="0.950"/></svg>
<svg style="left:410px;top:876.2px" width="17" height="17" viewBox="0 0 17 17" ><g stroke="#cfe4ec" stroke-linecap="round" fill="none"><path d="M2.700 14.700L11.800 5.600" stroke-width="3.500"/><path d="M2 1.800l3.400 3.400" stroke-width="3.100"/><path d="M5.600 5.600l4.200 4.200" stroke-width="1.500"/><path d="M10.200 10.200l5.400 5.400" stroke-width="2.300"/></g><circle cx="13" cy="4.300" r="3.900" fill="#cfe4ec"/><path d="M12.600 4.600L16.200 -0.600 18.600 2.800z" fill="#589db7"/><circle cx="2.900" cy="14.500" r="0.900" fill="#589db7"/><path d="M1.300 2.700l1.500-1.500M2.500 3.900l1.500-1.500M3.700 5.100l1.500-1.500" stroke="#589db7" stroke-width="0.500"/></svg>
<svg style="left:432.6px;top:876.2px" width="14" height="17" viewBox="0 0 14 17" ><path d="M0.600 0.700h9.300l3.400 3.400v12.900H0.600z" fill="#cfe4ec"/><path d="M9.900 0.700v3.400h3.400z" fill="#589db7" stroke="#cfe4ec" stroke-width="0.800"/><g fill="none" stroke="#589db7" stroke-width="1.100"><rect x="2.300" y="2.800" width="1.800" height="2.700" rx="0.900"/><path d="M5.800 2.800v2.700M7.700 2.800v2.700"/><path d="M2.500 7.500v2.700"/><rect x="4.300" y="7.500" width="1.800" height="2.700" rx="0.900"/><path d="M7.900 7.500v2.700"/><rect x="9.600" y="7.500" width="1.800" height="2.700" rx="0.900"/><rect x="2.300" y="12.200" width="1.800" height="2.700" rx="0.900"/><path d="M5.800 12.200v2.700"/><rect x="7.400" y="12.200" width="1.800" height="2.700" rx="0.900"/><path d="M10.900 12.200v2.700"/></g></svg>
<svg style="left:452px;top:876.2px" width="17" height="17" viewBox="0 0 17 17" ><g fill="#cfe4ec"><path d="M4.300 5.600L5.400 1.500c0.200-0.600 0.700-0.800 1.200-0.600l1.900 0.700 1.900-0.700c0.500-0.200 1 0 1.200 0.600l1.100 4.100z"/><path d="M0.300 7c0-0.800 3.700-1.400 8.200-1.400s8.200 0.600 8.200 1.400-3.700 1.400-8.200 1.400-8.200-0.600-8.200-1.400z"/><path d="M3 9.500h11l-1.300 3.400-2.400 0.500-0.700-1.700h-2.200l-0.700 1.700-2.400-0.500z"/><path d="M1.600 10.300l3.600 3.700 2.600 1 0.700 1.600 0.700-1.600 2.600-1 3.600-3.700-4.500 6.500h-4.800z"/></g></svg>
<svg style="left:473px;top:876.2px" width="17" height="17" viewBox="0 0 17 17" ><path d="M3.900 11.500a3.600 3.600 0 0 1-1.200-6.900 3 3 0 0 1 3.300-2.600 4 4 0 0 1 6.300 0.300 3 3 0 0 1 2.400 3.200 3.200 3.200 0 0 1-1.300 6z" fill="#cfe4ec"/><path d="M7.300 12.300h2.200v1.900h1.700l-2.800 2.900-2.800-2.900h1.700z" fill="#cfe4ec"/><path d="M5.900 5.500H3.700v4.600h2.200M3.700 7.800h1.900M7 5.500l3.200 4.600M10.200 5.500L7 10.100M13.700 5.500h-2.200v4.600h2.200M11.500 7.800h1.900" fill="none" stroke="#589db7" stroke-width="1.150"/></svg>
<svg style="left:902px;top:848.0px" width="11.4" height="10.4" viewBox="0 0 12 11" ><g fill="none" stroke="#d2e6ee" stroke-width="1.100"><rect x="3.600" y="0.550" width="7.600" height="6.800" rx="1.100"/><path d="M3.600 3.200H1.600a1 1 0 0 0-1 1v5.100a1 1 0 0 0 1 1h5.800a1 1 0 0 0 1-1V7.400"/></g></svg>
<svg style="left:902px;top:866.4000000000001px" width="11.4" height="10.4" viewBox="0 0 12 11" ><g fill="none" stroke="#d2e6ee" stroke-width="1.100"><rect x="3.600" y="0.550" width="7.600" height="6.800" rx="1.100"/><path d="M3.600 3.200H1.600a1 1 0 0 0-1 1v5.100a1 1 0 0 0 1 1h5.800a1 1 0 0 0 1-1V7.400"/></g></svg>
<svg style="left:902px;top:885.4000000000001px" width="11.4" height="10.4" viewBox="0 0 12 11" ><g fill="none" stroke="#d2e6ee" stroke-width="1.100"><rect x="3.600" y="0.550" width="7.600" height="6.800" rx="1.100"/><path d="M3.600 3.200H1.600a1 1 0 0 0-1 1v5.100a1 1 0 0 0 1 1h5.800a1 1 0 0 0 1-1V7.400"/></g></svg>
<div class="t" style="left:32.02px;top:11.00px;font-size:15px;color:#fff;letter-spacing:0.166px;-webkit-text-stroke:0.55px #fff">Lookup</div>
<div class="t" style="left:103.75px;top:11.00px;font-size:15px;color:#bcc8d1;letter-spacing:-0.993px">YARA</div>
<div class="t" style="left:1470.75px;top:2.00px;font-size:13px;color:#fff;letter-spacing:-0.429px;font-weight:bold">Premium</div>
<div class="t" style="left:1346.50px;top:19.00px;font-size:13px;color:#aebbc5;letter-spacing:-0.022px">License expires:</div>
<div class="t" style="left:1446.88px;top:19.00px;font-size:13px;color:#eef2f5;letter-spacing:-0.078px;-webkit-text-stroke:0.25px #eef2f5">Nov 05, 2026</div>
<div class="t" style="left:46.25px;top:62.00px;font-size:19px;color:#e9eef1;letter-spacing:-0.212px">domainName:&quot;</div>
<div class="t" style="left:169.20px;top:62.00px;font-size:19px;color:#5fd07d;letter-spacing:0.120px">databap.mom</div>
<div class="t" style="left:286.60px;top:62.00px;font-size:19px;color:#e9eef1;letter-spacing:0.000px">&quot;</div>
<div class="t" style="left:1255.28px;top:62.00px;font-size:15px;color:#12303f;letter-spacing:-0.297px;-webkit-text-stroke:0.55px #12303f">Search</div>
<div class="t" style="left:28.46px;top:102.00px;font-size:15px;color:#fff;letter-spacing:-0.264px;-webkit-text-stroke:0.42px #fff">Overview</div>
<div class="t" style="left:138.46px;top:102.00px;font-size:15px;color:#b5c3ce;letter-spacing:-0.066px;-webkit-text-stroke:0.42px #b5c3ce">Domains 1</div>
<div class="t" style="left:254.71px;top:102.00px;font-size:15px;color:#67839a;letter-spacing:0.204px;-webkit-text-stroke:0.42px #67839a">IPs</div>
<div class="t" style="left:324.21px;top:102.00px;font-size:15px;color:#b5c3ce;letter-spacing:-0.419px;-webkit-text-stroke:0.42px #b5c3ce">URLs 8</div>
<div class="t" style="left:416.71px;top:102.00px;font-size:15px;color:#67839a;letter-spacing:-0.105px;-webkit-text-stroke:0.42px #67839a">Events</div>
<div class="t" style="left:509.71px;top:102.00px;font-size:15px;color:#67839a;letter-spacing:0.228px;-webkit-text-stroke:0.42px #67839a">Files</div>
<div class="t" style="left:590.21px;top:102.00px;font-size:15px;color:#67839a;letter-spacing:0.289px;-webkit-text-stroke:0.42px #67839a">Network threats</div>
<div class="t" style="left:748.21px;top:102.00px;font-size:15px;color:#67839a;letter-spacing:0.157px;-webkit-text-stroke:0.42px #67839a">Synchronization</div>
<div class="t" style="left:906.46px;top:102.00px;font-size:15px;color:#b5c3ce;letter-spacing:-0.106px;-webkit-text-stroke:0.42px #b5c3ce">Analyses 3</div>
<div class="t" style="left:32.00px;top:147.00px;font-size:18.75px;color:#ee8587;letter-spacing:0.403px">Malicious</div>
<div class="t" style="left:138.00px;top:140.00px;font-size:13px;color:#aebbc5;letter-spacing:-0.018px">Last seen</div>
<div class="t" style="left:138.00px;top:156.00px;font-size:15px;color:#fff;letter-spacing:-0.161px;font-weight:bold">November 06, 2025</div>
<div class="t" style="left:305.40px;top:139.00px;font-size:13px;color:#fff;letter-spacing:-0.697px;font-weight:bold">Loader</div>
<div class="t" style="left:366.70px;top:139.00px;font-size:13px;color:#fff;letter-spacing:-1.000px;font-weight:bold">Lumma</div>
<div class="t" style="left:431.00px;top:139.00px;font-size:13px;color:#fff;letter-spacing:-0.384px;font-weight:bold">Stealer</div>
<div class="t" style="left:16.60px;top:197.00px;font-size:15px;color:#bac8d2;letter-spacing:-0.081px;-webkit-text-stroke:0.4px #bac8d2">Domains</div>
<div class="t" style="left:80.30px;top:197.00px;font-size:15px;color:#fff;letter-spacing:0.000px;font-weight:bold">1</div>
<div class="t" style="left:16.60px;top:272.00px;font-size:15px;color:#bac8d2;letter-spacing:-0.224px;-webkit-text-stroke:0.4px #bac8d2">Events (no data)</div>
<div class="t" style="left:16.60px;top:322.00px;font-size:15px;color:#bac8d2;letter-spacing:-0.023px;-webkit-text-stroke:0.4px #bac8d2">Network threats (no data)</div>
<div class="t" style="left:783.60px;top:198.00px;font-size:15px;color:#bac8d2;letter-spacing:-0.178px;-webkit-text-stroke:0.4px #bac8d2">Countries (no data)</div>
<div class="t" style="left:1165.60px;top:198.00px;font-size:15px;color:#bac8d2;letter-spacing:-0.296px;-webkit-text-stroke:0.4px #bac8d2">ASNs (no data)</div>
<div class="t" style="left:782.60px;top:248.00px;font-size:15px;color:#bac8d2;letter-spacing:-0.055px;-webkit-text-stroke:0.4px #bac8d2">Ports (no data)</div>
<div class="t" style="left:782.60px;top:298.00px;font-size:15px;color:#bac8d2;letter-spacing:-0.140px;-webkit-text-stroke:0.4px #bac8d2">IPs (no data)</div>
<div class="t" style="left:782.60px;top:348.00px;font-size:15px;color:#bac8d2;letter-spacing:-1.186px;-webkit-text-stroke:0.4px #bac8d2">URLs</div>
<div class="t" style="left:821.40px;top:348.00px;font-size:15px;color:#fff;letter-spacing:0.000px;font-weight:bold">8</div>
<div class="t" style="left:782.60px;top:569.00px;font-size:15px;color:#bac8d2;letter-spacing:-0.138px;-webkit-text-stroke:0.4px #bac8d2">Files (no data)</div>
<div class="t" style="left:783.60px;top:620.00px;font-size:15px;color:#bac8d2;letter-spacing:-0.145px;-webkit-text-stroke:0.4px #bac8d2">Synchronization (no data)</div>
<div class="t" style="left:17.10px;top:229.00px;font-size:13px;color:#a2b3bf;letter-spacing:-0.119px;-webkit-text-stroke:0.2px #a2b3bf">Nov 06, 2025</div>
<div class="t" style="left:132.75px;top:229.00px;font-size:13px;color:#e3e9ed;letter-spacing:-0.370px;font-weight:bold">databap.mom</div>
<div class="t" style="left:232.50px;top:228.00px;font-size:11.2px;color:#fff;letter-spacing:-0.611px;font-weight:bold">malconf</div>
<div class="t" style="left:782.90px;top:380.00px;font-size:13px;color:#a2b3bf;letter-spacing:-0.100px;-webkit-text-stroke:0.2px #a2b3bf">Nov 06, 2025</div>
<div class="t" style="left:898.75px;top:380.00px;font-size:13px;color:#e3e9ed;letter-spacing:-0.449px;font-weight:bold">bendavo.su/asdsa</div>
<div class="t" style="left:1024.70px;top:379.00px;font-size:11.2px;color:#fff;letter-spacing:-0.528px;font-weight:bold">malconf</div>
<div class="t" style="left:1090.20px;top:379.00px;font-size:11.2px;color:#fff;letter-spacing:-0.959px;font-weight:bold">lumma</div>
<div class="t" style="left:782.90px;top:401.00px;font-size:13px;color:#a2b3bf;letter-spacing:-0.100px;-webkit-text-stroke:0.2px #a2b3bf">Nov 06, 2025</div>
<div class="t" style="left:898.75px;top:401.00px;font-size:13px;color:#e3e9ed;letter-spacing:-0.435px;font-weight:bold">conxmsw.su/vcsf</div>
<div class="t" style="left:1019.70px;top:400.00px;font-size:11.2px;color:#fff;letter-spacing:-0.528px;font-weight:bold">malconf</div>
<div class="t" style="left:1085.20px;top:400.00px;font-size:11.2px;color:#fff;letter-spacing:-0.959px;font-weight:bold">lumma</div>
<div class="t" style="left:782.90px;top:422.00px;font-size:13px;color:#a2b3bf;letter-spacing:-0.100px;-webkit-text-stroke:0.2px #a2b3bf">Nov 06, 2025</div>
<div class="t" style="left:898.75px;top:422.00px;font-size:13px;color:#e3e9ed;letter-spacing:-0.391px;font-weight:bold">exposqw.su/casc</div>
<div class="t" style="left:1018.70px;top:421.00px;font-size:11.2px;color:#fff;letter-spacing:-0.528px;font-weight:bold">malconf</div>
<div class="t" style="left:1084.20px;top:421.00px;font-size:11.2px;color:#fff;letter-spacing:-0.959px;font-weight:bold">lumma</div>
<div class="t" style="left:782.90px;top:443.00px;font-size:13px;color:#a2b3bf;letter-spacing:-0.100px;-webkit-text-stroke:0.2px #a2b3bf">Nov 06, 2025</div>
<div class="t" style="left:898.75px;top:443.00px;font-size:13px;color:#e3e9ed;letter-spacing:-0.425px;font-weight:bold">narroxp.su/rewd</div>
<div class="t" style="left:1013.20px;top:442.00px;font-size:11.2px;color:#fff;letter-spacing:-0.528px;font-weight:bold">malconf</div>
<div class="t" style="left:1078.70px;top:442.00px;font-size:11.2px;color:#fff;letter-spacing:-0.959px;font-weight:bold">lumma</div>
<div class="t" style="left:782.90px;top:464.00px;font-size:13px;color:#a2b3bf;letter-spacing:-0.100px;-webkit-text-stroke:0.2px #a2b3bf">Nov 06, 2025</div>
<div class="t" style="left:898.75px;top:464.00px;font-size:13px;color:#e3e9ed;letter-spacing:-0.277px;font-weight:bold">ozonelf.su/asd</div>
<div class="t" style="left:1004.70px;top:463.00px;font-size:11.2px;color:#fff;letter-spacing:-0.528px;font-weight:bold">malconf</div>
<div class="t" style="left:1070.20px;top:463.00px;font-size:11.2px;color:#fff;letter-spacing:-0.959px;font-weight:bold">lumma</div>
<div class="t" style="left:782.90px;top:485.00px;font-size:13px;color:#a2b3bf;letter-spacing:-0.100px;-webkit-text-stroke:0.2px #a2b3bf">Nov 06, 2025</div>
<div class="t" style="left:898.75px;top:485.00px;font-size:13px;color:#e3e9ed;letter-spacing:-0.329px;font-weight:bold">squatje.su/asdasd</div>
<div class="t" style="left:1025.45px;top:484.00px;font-size:11.2px;color:#fff;letter-spacing:-0.528px;font-weight:bold">malconf</div>
<div class="t" style="left:1090.95px;top:484.00px;font-size:11.2px;color:#fff;letter-spacing:-0.959px;font-weight:bold">lumma</div>
<div class="t" style="left:782.90px;top:506.00px;font-size:13px;color:#a2b3bf;letter-spacing:-0.100px;-webkit-text-stroke:0.2px #a2b3bf">Nov 06, 2025</div>
<div class="t" style="left:898.75px;top:506.00px;font-size:13px;color:#e3e9ed;letter-spacing:-0.342px;font-weight:bold">squeaue.su/qwe</div>
<div class="t" style="left:1013.70px;top:505.00px;font-size:11.2px;color:#fff;letter-spacing:-0.528px;font-weight:bold">malconf</div>
<div class="t" style="left:1079.20px;top:505.00px;font-size:11.2px;color:#fff;letter-spacing:-0.959px;font-weight:bold">lumma</div>
<div class="t" style="left:782.90px;top:527.00px;font-size:13px;color:#a2b3bf;letter-spacing:-0.100px;-webkit-text-stroke:0.2px #a2b3bf">Nov 06, 2025</div>
<div class="t" style="left:898.75px;top:527.00px;font-size:13px;color:#e3e9ed;letter-spacing:-0.378px;font-weight:bold">vicareu.su/bcdf</div>
<div class="t" style="left:1008.70px;top:526.00px;font-size:11.2px;color:#fff;letter-spacing:-0.528px;font-weight:bold">malconf</div>
<div class="t" style="left:1074.20px;top:526.00px;font-size:11.2px;color:#fff;letter-spacing:-0.959px;font-weight:bold">lumma</div>
<div class="t" style="left:21.60px;top:670.00px;font-size:15px;color:#fff;letter-spacing:0.000px;font-weight:bold">3</div>
<div class="t" style="left:34.02px;top:670.00px;font-size:15px;color:#bccad4;letter-spacing:0.158px;-webkit-text-stroke:0.45px #bccad4">out of</div>
<div class="t" style="left:78.40px;top:670.00px;font-size:15px;color:#fff;letter-spacing:0.000px;font-weight:bold">3</div>
<div class="t" style="left:90.12px;top:670.00px;font-size:15px;color:#bccad4;letter-spacing:0.250px;-webkit-text-stroke:0.45px #bccad4">matching analyses displayed. Refine query for different results.</div>
<div class="t" style="left:64.50px;top:722.00px;font-size:13px;color:#e4f0f5;letter-spacing:-0.540px;font-weight:bold">Windows 11 Professional 64 bit</div>
<div class="t" style="left:63.73px;top:739.00px;font-size:13px;color:#c0dce8;letter-spacing:-0.229px;-webkit-text-stroke:0.45px #c0dce8">November 06, 2025 03:38</div>
<div class="t" style="left:394.70px;top:718.00px;font-size:11px;color:#fff;letter-spacing:-0.581px;font-weight:bold">Malicious activity</div>
<div class="t" style="left:533.60px;top:712.00px;font-size:12.5px;color:#dcebf2;letter-spacing:-0.233px;font-weight:bold">251104-rvpzxadk3x_pw_infected.zip</div>
<div class="t" style="left:533.68px;top:729.00px;font-size:10.8px;color:#add2e1;letter-spacing:-0.153px;-webkit-text-stroke:0.15px #add2e1">Zip archive data, at least v2.0 to extract, compression method=A...</div>
<div class="t" style="left:542.05px;top:752.00px;font-size:11.2px;color:#fff;letter-spacing:-0.566px;-webkit-text-stroke:0.5px #fff">arch-exec</div>
<div class="t" style="left:608.65px;top:752.00px;font-size:11.2px;color:#fff;letter-spacing:-0.662px;-webkit-text-stroke:0.5px #fff">lumma</div>
<div class="t" style="left:662.15px;top:752.00px;font-size:11.2px;color:#fff;letter-spacing:-0.426px;-webkit-text-stroke:0.5px #fff">stealer</div>
<div class="t" style="left:714.95px;top:752.00px;font-size:11.2px;color:#fff;letter-spacing:-0.575px;-webkit-text-stroke:0.5px #fff">loader</div>
<div class="t" style="left:765.25px;top:752.00px;font-size:11.2px;color:#fff;letter-spacing:-0.972px;-webkit-text-stroke:0.5px #fff">upx</div>
<div class="t" style="left:803.25px;top:752.00px;font-size:11.2px;color:#fff;letter-spacing:-0.415px;-webkit-text-stroke:0.5px #fff">golang</div>
<div class="t" style="left:855.70px;top:714.00px;font-size:10.5px;color:#d4e8f0;letter-spacing:-0.290px;font-weight:bold">MD5:</div>
<div class="t" style="left:918.17px;top:716.00px;font-size:10.42px;color:#e6f1f6;letter-spacing:0.007px;font-family:'Liberation Mono',monospace;-webkit-text-stroke:0.35px #e6f1f6">1B1A69DF5BF42E616D740DCED6FA3F58</div>
<div class="t" style="left:855.70px;top:733.00px;font-size:10.5px;color:#d4e8f0;letter-spacing:-0.427px;font-weight:bold">SHA1:</div>
<div class="t" style="left:918.17px;top:734.00px;font-size:10.42px;color:#e6f1f6;letter-spacing:0.010px;font-family:'Liberation Mono',monospace;-webkit-text-stroke:0.35px #e6f1f6">55619FE00D961C2DFC679D6A9BA1AE88F563B97D</div>
<div class="t" style="left:855.70px;top:752.00px;font-size:10.5px;color:#d4e8f0;letter-spacing:-0.231px;font-weight:bold">SHA256:</div>
<div class="t" style="left:918.17px;top:753.00px;font-size:10.42px;color:#e6f1f6;letter-spacing:0.016px;font-family:'Liberation Mono',monospace;-webkit-text-stroke:0.35px #e6f1f6">A34C74A3D87B10B8C6EFF522A53B234D84DE1A51D216E9223F1D6B1C9A107FAB</div>
<div class="t" style="left:64.50px;top:789.00px;font-size:13px;color:#e4f0f5;letter-spacing:-0.565px;font-weight:bold">Windows 10 Professional 64 bit</div>
<div class="t" style="left:63.73px;top:806.00px;font-size:13px;color:#c0dce8;letter-spacing:-0.229px;-webkit-text-stroke:0.45px #c0dce8">November 04, 2025 18:04</div>
<div class="t" style="left:394.70px;top:785.00px;font-size:11px;color:#fff;letter-spacing:-0.581px;font-weight:bold">Malicious activity</div>
<div class="t" style="left:533.60px;top:779.00px;font-size:12.5px;color:#dcebf2;letter-spacing:-0.487px;font-weight:bold">Setup.exe</div>
<div class="t" style="left:533.68px;top:796.00px;font-size:10.8px;color:#add2e1;letter-spacing:-0.234px;-webkit-text-stroke:0.15px #add2e1">PE32+ executable (GUI) x86-64, for MS Windows, 9 sections</div>
<div class="t" style="left:542.05px;top:819.00px;font-size:11.2px;color:#fff;letter-spacing:-0.612px;-webkit-text-stroke:0.5px #fff">lumma</div>
<div class="t" style="left:595.85px;top:819.00px;font-size:11.2px;color:#fff;letter-spacing:-0.426px;-webkit-text-stroke:0.5px #fff">stealer</div>
<div class="t" style="left:648.15px;top:819.00px;font-size:11.2px;color:#fff;letter-spacing:-0.575px;-webkit-text-stroke:0.5px #fff">loader</div>
<div class="t" style="left:698.55px;top:819.00px;font-size:11.2px;color:#fff;letter-spacing:-0.415px;-webkit-text-stroke:0.5px #fff">golang</div>
<div class="t" style="left:855.70px;top:781.00px;font-size:10.5px;color:#d4e8f0;letter-spacing:-0.290px;font-weight:bold">MD5:</div>
<div class="t" style="left:918.17px;top:783.00px;font-size:10.42px;color:#e6f1f6;letter-spacing:0.007px;font-family:'Liberation Mono',monospace;-webkit-text-stroke:0.35px #e6f1f6">527A2825FDE79195754C7744AD2D5EC9</div>
<div class="t" style="left:855.70px;top:800.00px;font-size:10.5px;color:#d4e8f0;letter-spacing:-0.427px;font-weight:bold">SHA1:</div>
<div class="t" style="left:918.17px;top:801.00px;font-size:10.42px;color:#e6f1f6;letter-spacing:0.010px;font-family:'Liberation Mono',monospace;-webkit-text-stroke:0.35px #e6f1f6">A5D6B641AA7A29DD269A43E51BABE2BA395EF4F0</div>
<div class="t" style="left:855.70px;top:819.00px;font-size:10.5px;color:#d4e8f0;letter-spacing:-0.231px;font-weight:bold">SHA256:</div>
<div class="t" style="left:918.17px;top:820.00px;font-size:10.42px;color:#e6f1f6;letter-spacing:0.016px;font-family:'Liberation Mono',monospace;-webkit-text-stroke:0.35px #e6f1f6">309F0B4EFAD7C3D24843ED8E6956CA1C717D450E1C74E2D016DE027ABF0029FE</div>
<div class="t" style="left:64.50px;top:856.00px;font-size:13px;color:#e4f0f5;letter-spacing:-0.565px;font-weight:bold">Windows 10 Professional 64 bit</div>
<div class="t" style="left:63.73px;top:873.00px;font-size:13px;color:#c0dce8;letter-spacing:-0.229px;-webkit-text-stroke:0.45px #c0dce8">November 04, 2025 18:04</div>
<div class="t" style="left:394.70px;top:852.00px;font-size:11px;color:#fff;letter-spacing:-0.581px;font-weight:bold">Malicious activity</div>
<div class="t" style="left:533.60px;top:846.00px;font-size:12.5px;color:#dcebf2;letter-spacing:-0.487px;font-weight:bold">Setup.exe</div>
<div class="t" style="left:533.68px;top:863.00px;font-size:10.8px;color:#add2e1;letter-spacing:-0.234px;-webkit-text-stroke:0.15px #add2e1">PE32+ executable (GUI) x86-64, for MS Windows, 9 sections</div>
<div class="t" style="left:542.05px;top:886.00px;font-size:11.2px;color:#fff;letter-spacing:-0.612px;-webkit-text-stroke:0.5px #fff">lumma</div>
<div class="t" style="left:595.85px;top:886.00px;font-size:11.2px;color:#fff;letter-spacing:-0.426px;-webkit-text-stroke:0.5px #fff">stealer</div>
<div class="t" style="left:648.15px;top:886.00px;font-size:11.2px;color:#fff;letter-spacing:-0.575px;-webkit-text-stroke:0.5px #fff">loader</div>
<div class="t" style="left:698.55px;top:886.00px;font-size:11.2px;color:#fff;letter-spacing:-0.415px;-webkit-text-stroke:0.5px #fff">golang</div>
<div class="t" style="left:855.70px;top:848.00px;font-size:10.5px;color:#d4e8f0;letter-spacing:-0.290px;font-weight:bold">MD5:</div>
<div class="t" style="left:918.17px;top:850.00px;font-size:10.42px;color:#e6f1f6;letter-spacing:0.007px;font-family:'Liberation Mono',monospace;-webkit-text-stroke:0.35px #e6f1f6">527A2825FDE79195754C7744AD2D5EC9</div>
<div class="t" style="left:855.70px;top:867.00px;font-size:10.5px;color:#d4e8f0;letter-spacing:-0.427px;font-weight:bold">SHA1:</div>
<div class="t" style="left:918.17px;top:868.00px;font-size:10.42px;color:#e6f1f6;letter-spacing:0.010px;font-family:'Liberation Mono',monospace;-webkit-text-stroke:0.35px #e6f1f6">A5D6B641AA7A29DD269A43E51BABE2BA395EF4F0</div>
<div class="t" style="left:855.70px;top:886.00px;font-size:10.5px;color:#d4e8f0;letter-spacing:-0.231px;font-weight:bold">SHA256:</div>
<div class="t" style="left:918.17px;top:887.00px;font-size:10.42px;color:#e6f1f6;letter-spacing:0.016px;font-family:'Liberation Mono',monospace;-webkit-text-stroke:0.35px #e6f1f6">309F0B4EFAD7C3D24843ED8E6956CA1C717D450E1C74E2D016DE027ABF0029FE</div>
</body>
</html>
